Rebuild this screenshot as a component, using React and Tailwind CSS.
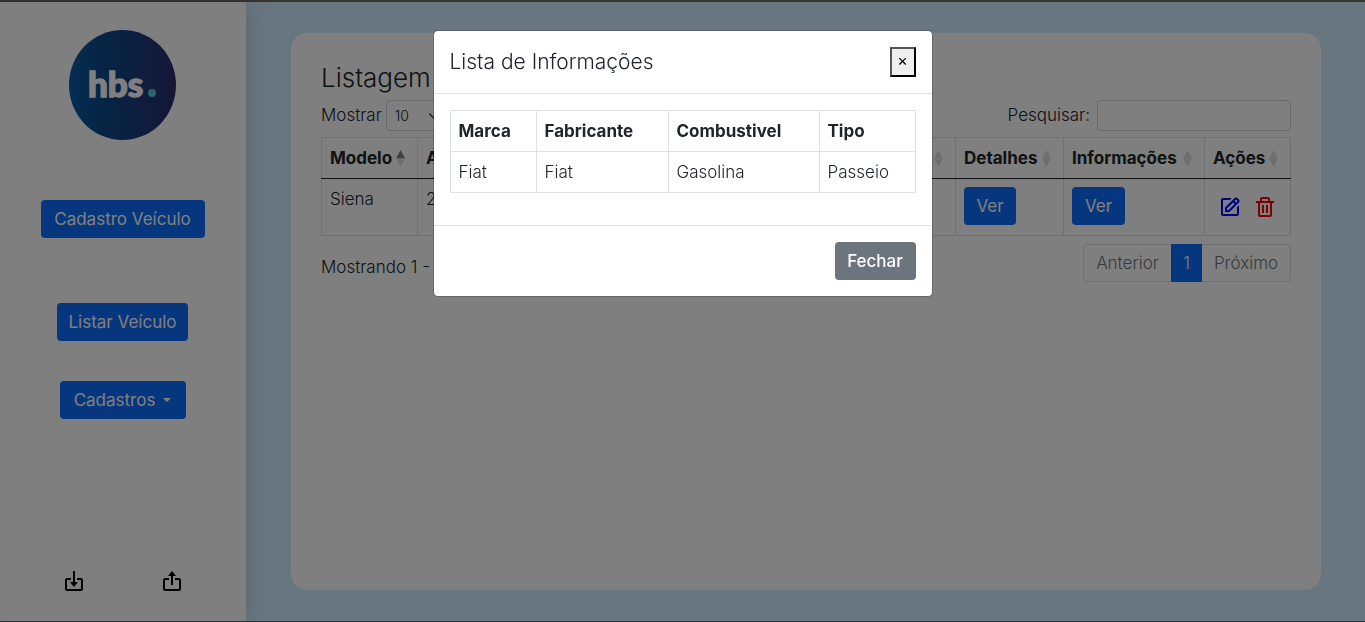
import { BiEdit, BiTrash, BiImport, BiExport } from "react-icons/bi";

const columns = [
  { label: "Modelo", width: "w-24", active: true },
  { label: "Ano", width: "w-[164px]" },
  { label: "Cor", width: "w-[160px]" },
  { label: "Placa", width: "" },
  { label: "Km", width: "w-[74px]" },
  { label: "Detalhes", width: "w-[108px]" },
  { label: "Informações", width: "w-[141px]" },
  { label: "Ações", width: "w-[86px]" },
];

const primaryButton =
  "flex h-[38px] items-center justify-center rounded bg-[#0d6efd] pb-px font-normal text-white";

function Logo() {
  return (
    <svg viewBox="0 0 107 110" className="h-[110px] w-[107px]" role="img" aria-label="hbs">
      <defs>
        <linearGradient id="logo-fill" x1="0" x2="1" y1="0" y2="0">
          <stop offset="0" stopColor="#0a5ca8" />
          <stop offset="0.35" stopColor="#0c4786" />
          <stop offset="0.7" stopColor="#1d3a7c" />
          <stop offset="1" stopColor="#2b2c6c" />
        </linearGradient>
      </defs>
      <ellipse cx="53.5" cy="55" rx="53.5" ry="55" fill="url(#logo-fill)" />
      <text x="19" y="67" fill="#fff" stroke="#fff" strokeWidth="1.4" fontSize="35" fontWeight="900" className="font-['Lato',sans-serif]">
        hbs
      </text>
      <circle cx="83" cy="63" r="4" fill="#5ac8d8" />
    </svg>
  );
}

function SortMark({ active }) {
  return (
    <svg viewBox="0 0 9 17" className="h-[17px] w-[9px] shrink-0" aria-hidden="true">
      <path d="M4.5 0 9 8.5H0z" fill={active ? "#7c8083" : "#dcdddd"} />
      <path d="M0 8.5h9L4.5 17z" fill="#dcdddd" />
    </svg>
  );
}

function Sidebar() {
  return (
    <aside className="flex w-[246px] shrink-0 flex-col items-center bg-white pt-7 pr-px pb-7 shadow-[0_0_24px_rgba(0,0,0,0.15)]">
      <Logo />
      <nav className="mt-[60px] flex flex-col items-center">
        <button className={`${primaryButton} w-[164px]`}>Cadastro Veículo</button>
        <button className={`${primaryButton} mt-[65px] w-[131px]`}>Listar Veículo</button>
        <button className={`${primaryButton} mt-10 w-[126px] gap-2`}>
          Cadastros
          <svg viewBox="0 0 8 4" className="h-1 w-2" aria-hidden="true">
            <path d="M0 0h8L4 4z" fill="currentColor" />
          </svg>
        </button>
      </nav>
      <div className="mt-auto flex gap-[74px] text-2xl text-black">
        <button aria-label="Importar"><BiImport /></button>
        <button aria-label="Exportar"><BiExport /></button>
      </div>
    </aside>
  );
}

function Listing() {
  return (
    <section className="flex-1 rounded-2xl bg-white p-[30px]">
      <h1 className="mb-2 text-[26px] leading-[29px] font-light">Listagem</h1>
      <div className="flex items-center justify-between">
        <label className="flex items-center gap-1">
          <span className="pb-0.5">Mostrar</span>
          <span className="relative flex">
            <select className="h-[31px] w-[69px] appearance-none rounded border border-[#ced4da] bg-white pl-2 text-sm">
              <option>10</option>
              <option>25</option>
            </select>
            <svg viewBox="0 0 16 16" className="pointer-events-none absolute top-[10px] right-[13px] h-3 w-4" fill="none" stroke="#343a40" strokeWidth="2" aria-hidden="true">
              <path d="m2 5 6 6 6-6" />
            </svg>
          </span>
        </label>
        <label className="flex items-center gap-[7px]">
          <span className="pb-0.5">Pesquisar:</span>
          <input type="search" className="h-[31px] w-[194px] rounded border border-[#ced4da] px-2 text-sm" />
        </label>
      </div>
      <table className="mt-[6px] w-full table-fixed border-collapse text-left">
        <thead>
          <tr className="h-[41px]">
            {columns.map((c) => (
              <th key={c.label} className={`${c.width} border border-[#dee2e6] border-b-[#212529] pr-3 pl-2 font-bold`}>
                <div className="flex items-center justify-between">
                  <span className="pb-px">{c.label}</span>
                  <SortMark active={c.active} />
                </div>
              </th>
            ))}
          </tr>
        </thead>
        <tbody>
          <tr className="h-[57px] align-top">
            {["Siena", "2010", "Prata", "ABC-1234", "0"].map((v) => (
              <td key={v} className="border border-[#dee2e6] p-2">{v}</td>
            ))}
            <td className="border border-[#dee2e6] p-2"><button className={`${primaryButton} w-[52px]`}>Ver</button></td>
            <td className="border border-[#dee2e6] p-2"><button className={`${primaryButton} w-[53px]`}>Ver</button></td>
            <td className="border border-[#dee2e6] p-2">
              <div className="mt-2 flex justify-center gap-[11px] text-2xl">
                <button aria-label="Editar" className="text-[#0000ff]"><BiEdit /></button>
                <button aria-label="Excluir" className="text-[#ff0000]"><BiTrash /></button>
              </div>
            </td>
          </tr>
        </tbody>
      </table>
      <div className="mt-2 flex items-start justify-between">
        <p className="pt-[11px]">Mostrando 1 -</p>
        <div className="flex h-[38px] text-[#6c757d]">
          <button className="w-[88px] rounded-l border border-r-0 border-[#dee2e6] pb-px">Anterior</button>
          <button className="w-[31px] bg-[#0d6efd] pb-px text-white">1</button>
          <button className="w-[89px] rounded-r border border-l-0 border-[#dee2e6] pb-px">Próximo</button>
        </div>
      </div>
    </section>
  );
}

function InfoDialog() {
  const cell = "h-[41px] border border-[#dee2e6] px-2 pb-px";
  return (
    <div className="fixed inset-0 flex items-start justify-center bg-black/50 pt-[30px]">
      <div role="dialog" aria-modal="true" aria-labelledby="dialog-title" className="w-[500px] rounded-[5px] border border-black/20 bg-white bg-clip-padding">
        <header className="flex items-center justify-between border-b border-[#dee2e6] p-4">
          <h2 id="dialog-title" className="text-[21px] leading-[30px] font-light">Lista de Informações</h2>
          <button aria-label="Fechar" className="h-[30px] w-[26px] border-2 border-t-[#555] border-r-black border-b-black border-l-[#555] bg-[#efefef] pb-1 text-base leading-none font-normal text-black">×</button>
        </header>
        <div className="p-4">
          <table className="mb-4 w-full table-fixed border-collapse text-left">
            <thead>
              <tr>
                <th className={`${cell} w-[86px]`}>Marca</th>
                <th className={`${cell} w-[132px]`}>Fabricante</th>
                <th className={`${cell} w-[151px]`}>Combustivel</th>
                <th className={cell}>Tipo</th>
              </tr>
            </thead>
            <tbody>
              <tr>
                {["Fiat", "Fiat", "Gasolina", "Passeio"].map((v, i) => (
                  <td key={i} className={cell}>{v}</td>
                ))}
              </tr>
            </tbody>
          </table>
        </div>
        <footer className="flex justify-end border-t border-[#dee2e6] p-4">
          <button className="h-[38px] w-[81px] rounded bg-[#6c757d] pb-px font-medium text-white">Fechar</button>
        </footer>
      </div>
    </div>
  );
}

export default function App() {
  return (
    <div className="flex min-h-screen border-t-2 border-b border-t-[#6a6666] border-b-[#54707f] bg-[#d1ecff] font-['Inter',sans-serif] text-[17px] leading-6 font-light text-[#212529]">
      <Sidebar />
      <main className="flex min-w-0 flex-1 py-[31px] pr-11 pl-[45px]">
        <Listing />
      </main>
      <InfoDialog />
    </div>
  );
}
